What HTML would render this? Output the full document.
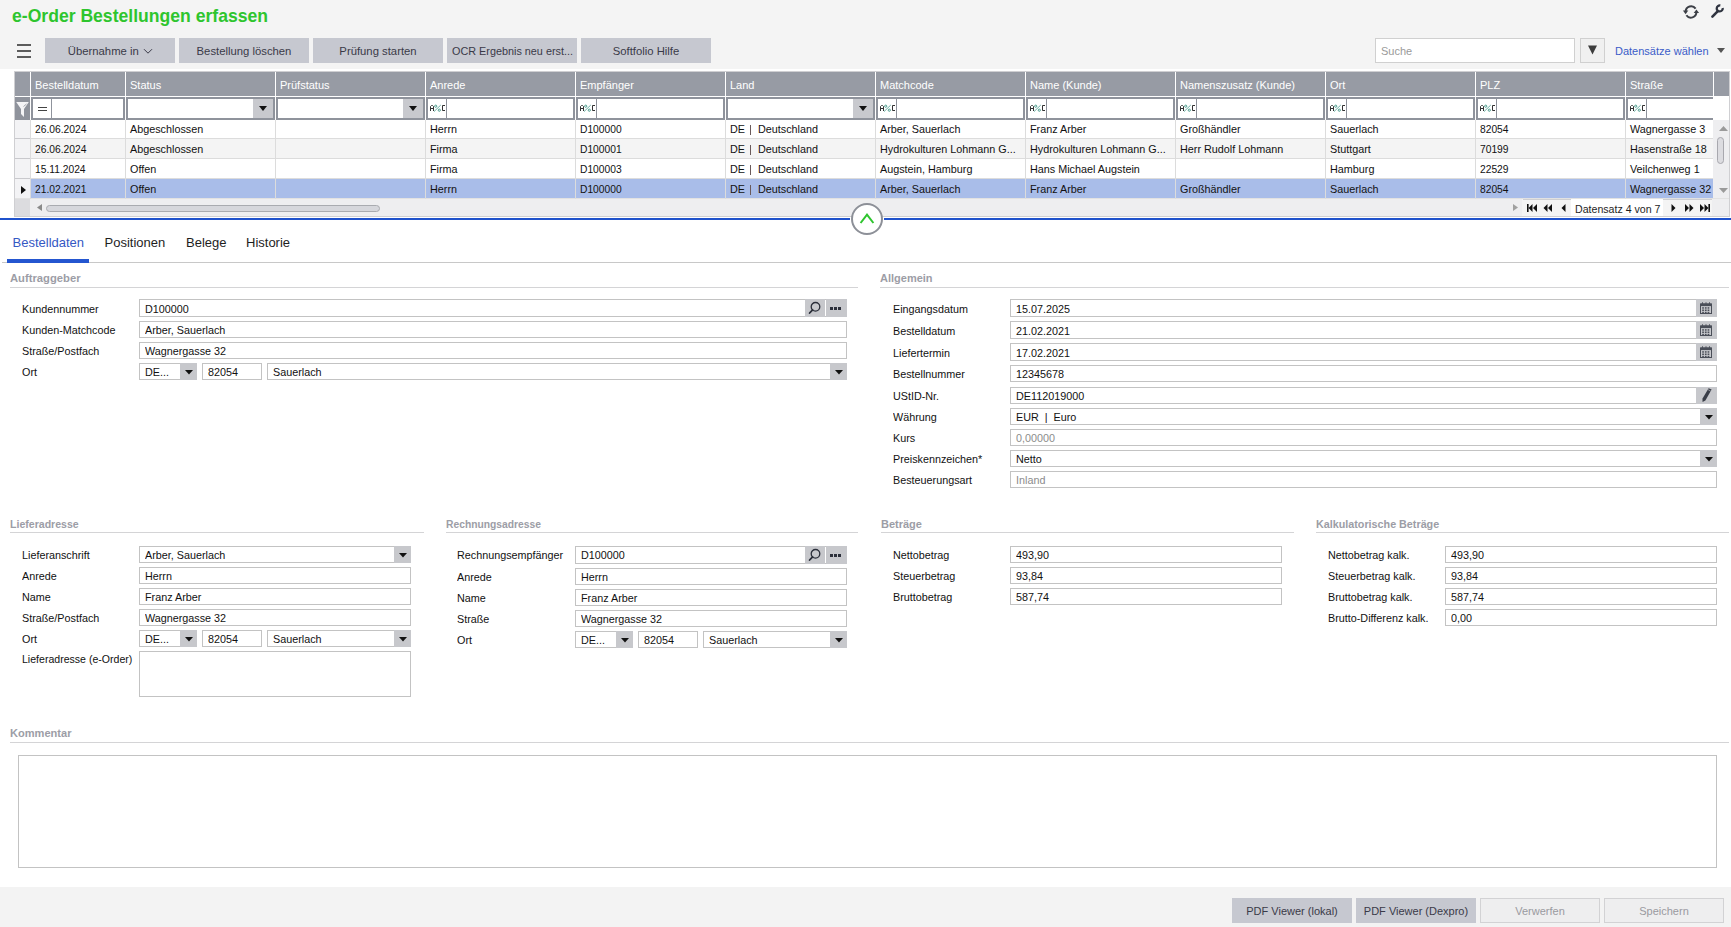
<!DOCTYPE html><html><head><meta charset="utf-8"><style>
html,body{margin:0;padding:0;width:1731px;height:927px;overflow:hidden;background:#fff;position:relative;font-family:"Liberation Sans",sans-serif;}
body div{position:absolute;box-sizing:border-box;}
.t{line-height:0;white-space:pre;}
</style></head><body>
<div style="left:0px;top:0px;width:1731px;height:69px;background:#f4f4f4"></div>
<div class="t" style="left:12px;top:15.59px;font-size:18.5px;color:#2ec52e;font-weight:bold;transform:scaleX(0.9503);transform-origin:0 0;">e-Order Bestellungen erfassen</div>
<div style="left:17px;top:44px;width:14px;height:2px;background:#5c5c5c"></div>
<div style="left:17px;top:50px;width:14px;height:2px;background:#5c5c5c"></div>
<div style="left:17px;top:56px;width:14px;height:2px;background:#5c5c5c"></div>
<div style="left:45px;top:38px;width:130px;height:25px;background:#c6c8d0"></div>
<div class="t" style="left:67.8px;top:50.78px;font-size:11.3px;color:#3a3a48;font-weight:normal;">Übernahme in</div>
<div style="left:179px;top:38px;width:130px;height:25px;background:#c6c8d0"></div>
<div class="t" style="left:196.56957421875px;top:50.78px;font-size:11.3px;color:#3a3a48;font-weight:normal;">Bestellung löschen</div>
<div style="left:313px;top:38px;width:130px;height:25px;background:#c6c8d0"></div>
<div class="t" style="left:339.36768359375003px;top:50.78px;font-size:11.3px;color:#3a3a48;font-weight:normal;">Prüfung starten</div>
<div style="left:447px;top:38px;width:130px;height:25px;background:#c6c8d0"></div>
<div class="t" style="left:451.8px;top:50.78px;font-size:11.3px;color:#3a3a48;font-weight:normal;transform:scaleX(0.9585);transform-origin:0 0;">OCR Ergebnis neu erst...</div>
<div style="left:581px;top:38px;width:130px;height:25px;background:#c6c8d0"></div>
<div class="t" style="left:612.7117890625px;top:50.78px;font-size:11.3px;color:#3a3a48;font-weight:normal;">Softfolio Hilfe</div>
<svg style="position:absolute;left:143px;top:48px" width="10" height="7" viewBox="0 0 10 7"><path d="M1 1.2 L5 5.2 L9 1.2" fill="none" stroke="#3a3a48" stroke-width="1"/></svg>
<div style="left:1375px;top:38px;width:200px;height:25px;background:#fff;border:1px solid #d0d0d0"></div>
<div class="t" style="left:1381px;top:51.19px;font-size:11px;color:#9a9a9a;font-weight:normal;">Suche</div>
<div style="left:1580px;top:38px;width:25px;height:25px;background:#f0f0f0;border:1px solid #d0d0d0"></div>
<svg style="position:absolute;left:1588px;top:45px" width="9" height="10" viewBox="0 0 9 10"><path d="M0 0.5 H9 L4.5 9.5 Z" fill="#3c3c3c"/></svg>
<div class="t" style="left:1615px;top:51.19px;font-size:11px;color:#3a5cc8;font-weight:normal;">Datensätze wählen</div>
<svg style="position:absolute;left:1717px;top:48px" width="8" height="5" viewBox="0 0 8 5"><path d="M0 0 H8 L4 5 Z" fill="#555"/></svg>
<svg style="position:absolute;left:1682px;top:3px" width="18" height="18" viewBox="0 0 18 18"><path d="M13.6 5.6 A5.5 5.5 0 0 0 3.6 8.6" fill="none" stroke="#3c3f46" stroke-width="2"/><path d="M0.9 7.6 H6.3 L3.6 11.2 Z" fill="#3c3f46"/><path d="M4.4 12.3 A5.5 5.5 0 0 0 14.4 9.1" fill="none" stroke="#3c3f46" stroke-width="2"/><path d="M11.7 10.1 H17.1 L14.4 6.5 Z" fill="#3c3f46"/></svg>
<svg style="position:absolute;left:1709px;top:3px" width="16" height="16" viewBox="0 0 16 16"><path d="M3.4 13.6 L8.6 8.4" stroke="#2f3440" stroke-width="2.6" stroke-linecap="round"/><path d="M13.7 5.0 A3 3 0 1 1 11.3 2.5" fill="none" stroke="#2f3440" stroke-width="2.3"/></svg>
<div style="left:14px;top:71px;width:1716px;height:146px;border:1px solid #cfcfd2"></div>
<div style="left:15px;top:72px;width:1714px;height:24px;background:#979ba4"></div>
<div style="left:15px;top:97px;width:1698px;height:23px;background:#8f939c"></div>
<div style="left:15px;top:96px;width:1714px;height:1px;background:#fff"></div>
<div style="left:1713px;top:96px;width:16px;height:24px;background:#fff"></div>
<div style="left:31px;top:120px;width:1682px;height:19px;background:#ffffff"></div>
<div style="left:31px;top:138px;width:1682px;height:1px;background:#dcdcdc"></div>
<div style="left:31px;top:139px;width:1682px;height:19px;background:#f4f4f4"></div>
<div style="left:31px;top:158px;width:1682px;height:1px;background:#dcdcdc"></div>
<div style="left:31px;top:159px;width:1682px;height:19px;background:#ffffff"></div>
<div style="left:31px;top:178px;width:1682px;height:1px;background:#dcdcdc"></div>
<div style="left:31px;top:179px;width:1682px;height:19px;background:#a9bde9"></div>
<div style="left:15px;top:120px;width:15px;height:79px;background:#f3f3f5"></div>
<div style="left:15px;top:138px;width:15px;height:1px;background:#c9c9cd"></div>
<div style="left:15px;top:158px;width:15px;height:1px;background:#c9c9cd"></div>
<div style="left:15px;top:178px;width:15px;height:1px;background:#c9c9cd"></div>
<div style="left:15px;top:198px;width:15px;height:1.5px;background:#c9c9cd"></div>
<svg style="position:absolute;left:15px;top:101px" width="15" height="17" viewBox="0 0 15 17"><path d="M1.2 1 H13.8 L9 8 V16 L6 13 V8 Z" fill="#f4f4f6"/><path d="M8.5 5.5 L11.5 3" stroke="#8f939c" stroke-width="0.8"/></svg>
<svg style="position:absolute;left:21px;top:186px" width="5" height="8" viewBox="0 0 5 8"><path d="M0 0 L5 4 L0 8 Z" fill="#111"/></svg>
<div style="left:1713px;top:120px;width:16px;height:80px;background:#eeeef0"></div>
<svg style="position:absolute;left:1719px;top:126px" width="9" height="5" viewBox="0 0 9 5"><path d="M0 5 L4.5 0 L9 5 Z" fill="#9a9a9a"/></svg>
<div style="left:1717px;top:137px;width:7px;height:27px;background:#dcdce0;border:1px solid #a8a8ae;border-radius:3.5px"></div>
<svg style="position:absolute;left:1719px;top:188px" width="9" height="5" viewBox="0 0 9 5"><path d="M0 0 L4.5 5 L9 0 Z" fill="#9a9a9a"/></svg>
<div style="left:15px;top:198px;width:1714px;height:1px;background:#e2e2e2"></div>
<div style="left:15px;top:199px;width:1714px;height:17px;background:#eeeef0"></div>
<div style="left:15px;top:199px;width:15px;height:17px;background:#dcdcdf"></div>
<svg style="position:absolute;left:37px;top:204px" width="5" height="7" viewBox="0 0 5 7"><path d="M5 0 L0 3.5 L5 7 Z" fill="#8a8a8a"/></svg>
<div style="left:46px;top:204.5px;width:334px;height:7px;background:#d6d7dc;border:1px solid #a9abb0;border-radius:3.5px"></div>
<div style="left:1522px;top:199px;width:190px;height:17px;background:#f4f4f4"></div>
<div style="left:1523px;top:199px;width:189px;height:1px;background:#cfcfd2"></div>
<div style="left:1571px;top:199px;width:92px;height:17px;background:#fff"></div>
<svg style="position:absolute;left:1513px;top:204px" width="5" height="7" viewBox="0 0 5 7"><path d="M0 0 L5 3.5 L0 7 Z" fill="#a0a0a0"/></svg>
<svg style="position:absolute;left:1527px;top:204px" width="10" height="8" viewBox="0 0 10 8"><path d="M0 0 H1.6 V8 H0 Z M5.5 0 L1.6 4 L5.5 8 Z M10 0 L6 4 L10 8 Z" fill="#111"/></svg>
<svg style="position:absolute;left:1543px;top:204px" width="9" height="8" viewBox="0 0 9 8"><path d="M4.5 0 L0.5 4 L4.5 8 Z M9 0 L5 4 L9 8 Z" fill="#111"/></svg>
<svg style="position:absolute;left:1561px;top:204px" width="5" height="8" viewBox="0 0 5 8"><path d="M4.5 0 L0.5 4 L4.5 8 Z" fill="#111"/></svg>
<div class="t" style="left:1574.5px;top:209.19px;font-size:11px;color:#1e1e1e;font-weight:normal;transform:scaleX(0.9643);transform-origin:0 0;">Datensatz 4 von 7</div>
<svg style="position:absolute;left:1671px;top:204px" width="5" height="8" viewBox="0 0 5 8"><path d="M0.5 0 L4.5 4 L0.5 8 Z" fill="#111"/></svg>
<svg style="position:absolute;left:1685px;top:204px" width="9" height="8" viewBox="0 0 9 8"><path d="M0 0 L4 4 L0 8 Z M4.5 0 L8.5 4 L4.5 8 Z" fill="#111"/></svg>
<svg style="position:absolute;left:1700px;top:204px" width="10" height="8" viewBox="0 0 10 8"><path d="M0 0 L4 4 L0 8 Z M4.5 0 L8.4 4 L4.5 8 Z M8.4 0 H10 V8 H8.4 Z" fill="#111"/></svg>
<div style="left:30px;top:72px;width:1px;height:48px;background:#fff"></div>
<div style="left:30px;top:120px;width:1px;height:79px;background:#dcdcdc"></div>
<div style="left:125px;top:72px;width:1px;height:48px;background:#fff"></div>
<div style="left:125px;top:120px;width:1px;height:79px;background:#dcdcdc"></div>
<div style="left:275px;top:72px;width:1px;height:48px;background:#fff"></div>
<div style="left:275px;top:120px;width:1px;height:79px;background:#dcdcdc"></div>
<div style="left:425px;top:72px;width:1px;height:48px;background:#fff"></div>
<div style="left:425px;top:120px;width:1px;height:79px;background:#dcdcdc"></div>
<div style="left:575px;top:72px;width:1px;height:48px;background:#fff"></div>
<div style="left:575px;top:120px;width:1px;height:79px;background:#dcdcdc"></div>
<div style="left:725px;top:72px;width:1px;height:48px;background:#fff"></div>
<div style="left:725px;top:120px;width:1px;height:79px;background:#dcdcdc"></div>
<div style="left:875px;top:72px;width:1px;height:48px;background:#fff"></div>
<div style="left:875px;top:120px;width:1px;height:79px;background:#dcdcdc"></div>
<div style="left:1025px;top:72px;width:1px;height:48px;background:#fff"></div>
<div style="left:1025px;top:120px;width:1px;height:79px;background:#dcdcdc"></div>
<div style="left:1175px;top:72px;width:1px;height:48px;background:#fff"></div>
<div style="left:1175px;top:120px;width:1px;height:79px;background:#dcdcdc"></div>
<div style="left:1325px;top:72px;width:1px;height:48px;background:#fff"></div>
<div style="left:1325px;top:120px;width:1px;height:79px;background:#dcdcdc"></div>
<div style="left:1475px;top:72px;width:1px;height:48px;background:#fff"></div>
<div style="left:1475px;top:120px;width:1px;height:79px;background:#dcdcdc"></div>
<div style="left:1625px;top:72px;width:1px;height:48px;background:#fff"></div>
<div style="left:1625px;top:120px;width:1px;height:79px;background:#dcdcdc"></div>
<div style="left:1713px;top:72px;width:1px;height:48px;background:#fff"></div>
<div class="t" style="left:35px;top:84.89px;font-size:11px;color:#ffffff;font-weight:normal;">Bestelldatum</div>
<div class="t" style="left:130px;top:84.89px;font-size:11px;color:#ffffff;font-weight:normal;">Status</div>
<div class="t" style="left:280px;top:84.89px;font-size:11px;color:#ffffff;font-weight:normal;">Prüfstatus</div>
<div class="t" style="left:430px;top:84.89px;font-size:11px;color:#ffffff;font-weight:normal;">Anrede</div>
<div class="t" style="left:580px;top:84.89px;font-size:11px;color:#ffffff;font-weight:normal;">Empfänger</div>
<div class="t" style="left:730px;top:84.89px;font-size:11px;color:#ffffff;font-weight:normal;">Land</div>
<div class="t" style="left:880px;top:84.89px;font-size:11px;color:#ffffff;font-weight:normal;">Matchcode</div>
<div class="t" style="left:1030px;top:84.89px;font-size:11px;color:#ffffff;font-weight:normal;">Name (Kunde)</div>
<div class="t" style="left:1180px;top:84.89px;font-size:11px;color:#ffffff;font-weight:normal;">Namenszusatz (Kunde)</div>
<div class="t" style="left:1330px;top:84.89px;font-size:11px;color:#ffffff;font-weight:normal;">Ort</div>
<div class="t" style="left:1480px;top:84.89px;font-size:11px;color:#ffffff;font-weight:normal;">PLZ</div>
<div class="t" style="left:1630px;top:84.89px;font-size:11px;color:#ffffff;font-weight:normal;">Straße</div>
<div style="left:33px;top:99px;width:90px;height:19px;background:#fff"></div>
<div style="left:51px;top:99px;width:1px;height:19px;background:#8f939c"></div>
<div style="left:38px;top:107px;width:9px;height:1px;background:#444"></div>
<div style="left:38px;top:110px;width:9px;height:1px;background:#444"></div>
<div style="left:128px;top:99px;width:145px;height:19px;background:#fff"></div>
<div style="left:253px;top:99px;width:20px;height:19px;background:#c8c9ce"></div>
<svg style="position:absolute;left:259px;top:106px" width="8" height="5" viewBox="0 0 8 5"><path d="M0 0 H8 L4 5 Z" fill="#111"/></svg>
<div style="left:278px;top:99px;width:145px;height:19px;background:#fff"></div>
<div style="left:403px;top:99px;width:20px;height:19px;background:#c8c9ce"></div>
<svg style="position:absolute;left:409px;top:106px" width="8" height="5" viewBox="0 0 8 5"><path d="M0 0 H8 L4 5 Z" fill="#111"/></svg>
<div style="left:428px;top:99px;width:145px;height:19px;background:#fff"></div>
<div style="left:446px;top:99px;width:1px;height:19px;background:#8f939c"></div>
<svg style="position:absolute;left:429px;top:103px" width="17" height="10" viewBox="0 0 17 10"><path d="M1.5 8 V3.5 L2.5 2.5 H3.5 L4.5 3.5 V8 M1.5 5.5 H4.5 M16 2.5 H13.5 V7.5 H16" fill="none" stroke="#333" stroke-width="1"/><path d="M5 8.6 L11.8 2" stroke="#5aa89a" stroke-width="0.9"/><circle cx="6.7" cy="3.2" r="1.1" fill="none" stroke="#3f9483" stroke-width="0.9"/><circle cx="10.3" cy="7.2" r="1.1" fill="none" stroke="#3f9483" stroke-width="0.9"/></svg>
<div style="left:578px;top:99px;width:145px;height:19px;background:#fff"></div>
<div style="left:596px;top:99px;width:1px;height:19px;background:#8f939c"></div>
<svg style="position:absolute;left:579px;top:103px" width="17" height="10" viewBox="0 0 17 10"><path d="M1.5 8 V3.5 L2.5 2.5 H3.5 L4.5 3.5 V8 M1.5 5.5 H4.5 M16 2.5 H13.5 V7.5 H16" fill="none" stroke="#333" stroke-width="1"/><path d="M5 8.6 L11.8 2" stroke="#5aa89a" stroke-width="0.9"/><circle cx="6.7" cy="3.2" r="1.1" fill="none" stroke="#3f9483" stroke-width="0.9"/><circle cx="10.3" cy="7.2" r="1.1" fill="none" stroke="#3f9483" stroke-width="0.9"/></svg>
<div style="left:728px;top:99px;width:145px;height:19px;background:#fff"></div>
<div style="left:853px;top:99px;width:20px;height:19px;background:#c8c9ce"></div>
<svg style="position:absolute;left:859px;top:106px" width="8" height="5" viewBox="0 0 8 5"><path d="M0 0 H8 L4 5 Z" fill="#111"/></svg>
<div style="left:878px;top:99px;width:145px;height:19px;background:#fff"></div>
<div style="left:896px;top:99px;width:1px;height:19px;background:#8f939c"></div>
<svg style="position:absolute;left:879px;top:103px" width="17" height="10" viewBox="0 0 17 10"><path d="M1.5 8 V3.5 L2.5 2.5 H3.5 L4.5 3.5 V8 M1.5 5.5 H4.5 M16 2.5 H13.5 V7.5 H16" fill="none" stroke="#333" stroke-width="1"/><path d="M5 8.6 L11.8 2" stroke="#5aa89a" stroke-width="0.9"/><circle cx="6.7" cy="3.2" r="1.1" fill="none" stroke="#3f9483" stroke-width="0.9"/><circle cx="10.3" cy="7.2" r="1.1" fill="none" stroke="#3f9483" stroke-width="0.9"/></svg>
<div style="left:1028px;top:99px;width:145px;height:19px;background:#fff"></div>
<div style="left:1046px;top:99px;width:1px;height:19px;background:#8f939c"></div>
<svg style="position:absolute;left:1029px;top:103px" width="17" height="10" viewBox="0 0 17 10"><path d="M1.5 8 V3.5 L2.5 2.5 H3.5 L4.5 3.5 V8 M1.5 5.5 H4.5 M16 2.5 H13.5 V7.5 H16" fill="none" stroke="#333" stroke-width="1"/><path d="M5 8.6 L11.8 2" stroke="#5aa89a" stroke-width="0.9"/><circle cx="6.7" cy="3.2" r="1.1" fill="none" stroke="#3f9483" stroke-width="0.9"/><circle cx="10.3" cy="7.2" r="1.1" fill="none" stroke="#3f9483" stroke-width="0.9"/></svg>
<div style="left:1178px;top:99px;width:145px;height:19px;background:#fff"></div>
<div style="left:1196px;top:99px;width:1px;height:19px;background:#8f939c"></div>
<svg style="position:absolute;left:1179px;top:103px" width="17" height="10" viewBox="0 0 17 10"><path d="M1.5 8 V3.5 L2.5 2.5 H3.5 L4.5 3.5 V8 M1.5 5.5 H4.5 M16 2.5 H13.5 V7.5 H16" fill="none" stroke="#333" stroke-width="1"/><path d="M5 8.6 L11.8 2" stroke="#5aa89a" stroke-width="0.9"/><circle cx="6.7" cy="3.2" r="1.1" fill="none" stroke="#3f9483" stroke-width="0.9"/><circle cx="10.3" cy="7.2" r="1.1" fill="none" stroke="#3f9483" stroke-width="0.9"/></svg>
<div style="left:1328px;top:99px;width:145px;height:19px;background:#fff"></div>
<div style="left:1346px;top:99px;width:1px;height:19px;background:#8f939c"></div>
<svg style="position:absolute;left:1329px;top:103px" width="17" height="10" viewBox="0 0 17 10"><path d="M1.5 8 V3.5 L2.5 2.5 H3.5 L4.5 3.5 V8 M1.5 5.5 H4.5 M16 2.5 H13.5 V7.5 H16" fill="none" stroke="#333" stroke-width="1"/><path d="M5 8.6 L11.8 2" stroke="#5aa89a" stroke-width="0.9"/><circle cx="6.7" cy="3.2" r="1.1" fill="none" stroke="#3f9483" stroke-width="0.9"/><circle cx="10.3" cy="7.2" r="1.1" fill="none" stroke="#3f9483" stroke-width="0.9"/></svg>
<div style="left:1478px;top:99px;width:145px;height:19px;background:#fff"></div>
<div style="left:1496px;top:99px;width:1px;height:19px;background:#8f939c"></div>
<svg style="position:absolute;left:1479px;top:103px" width="17" height="10" viewBox="0 0 17 10"><path d="M1.5 8 V3.5 L2.5 2.5 H3.5 L4.5 3.5 V8 M1.5 5.5 H4.5 M16 2.5 H13.5 V7.5 H16" fill="none" stroke="#333" stroke-width="1"/><path d="M5 8.6 L11.8 2" stroke="#5aa89a" stroke-width="0.9"/><circle cx="6.7" cy="3.2" r="1.1" fill="none" stroke="#3f9483" stroke-width="0.9"/><circle cx="10.3" cy="7.2" r="1.1" fill="none" stroke="#3f9483" stroke-width="0.9"/></svg>
<div style="left:1628px;top:99px;width:85px;height:19px;background:#fff"></div>
<div style="left:1646px;top:99px;width:1px;height:19px;background:#8f939c"></div>
<svg style="position:absolute;left:1629px;top:103px" width="17" height="10" viewBox="0 0 17 10"><path d="M1.5 8 V3.5 L2.5 2.5 H3.5 L4.5 3.5 V8 M1.5 5.5 H4.5 M16 2.5 H13.5 V7.5 H16" fill="none" stroke="#333" stroke-width="1"/><path d="M5 8.6 L11.8 2" stroke="#5aa89a" stroke-width="0.9"/><circle cx="6.7" cy="3.2" r="1.1" fill="none" stroke="#3f9483" stroke-width="0.9"/><circle cx="10.3" cy="7.2" r="1.1" fill="none" stroke="#3f9483" stroke-width="0.9"/></svg>
<div class="t" style="left:35px;top:129.46px;font-size:10.8px;color:#111111;font-weight:normal;transform:scaleX(0.95);transform-origin:0 0;">26.06.2024</div>
<div class="t" style="left:130px;top:129.46px;font-size:10.8px;color:#111111;font-weight:normal;">Abgeschlossen</div>
<div class="t" style="left:430px;top:129.46px;font-size:10.8px;color:#111111;font-weight:normal;">Herrn</div>
<div class="t" style="left:580px;top:129.46px;font-size:10.8px;color:#111111;font-weight:normal;transform:scaleX(0.95);transform-origin:0 0;">D100000</div>
<div class="t" style="left:730px;top:129.46px;font-size:10.8px;color:#111111;font-weight:normal;">DE</div>
<div style="left:750px;top:125.19999999999999px;width:1px;height:10px;background:#6a5a5a"></div>
<div class="t" style="left:758px;top:129.46px;font-size:10.8px;color:#111111;font-weight:normal;">Deutschland</div>
<div class="t" style="left:880px;top:129.46px;font-size:10.8px;color:#111111;font-weight:normal;">Arber, Sauerlach</div>
<div class="t" style="left:1030px;top:129.46px;font-size:10.8px;color:#111111;font-weight:normal;">Franz Arber</div>
<div class="t" style="left:1180px;top:129.46px;font-size:10.8px;color:#111111;font-weight:normal;">Großhändler</div>
<div class="t" style="left:1330px;top:129.46px;font-size:10.8px;color:#111111;font-weight:normal;">Sauerlach</div>
<div class="t" style="left:1480px;top:129.46px;font-size:10.8px;color:#111111;font-weight:normal;transform:scaleX(0.95);transform-origin:0 0;">82054</div>
<div class="t" style="left:1630px;top:129.46px;font-size:10.8px;color:#111111;font-weight:normal;">Wagnergasse 3</div>
<div class="t" style="left:35px;top:149.46px;font-size:10.8px;color:#111111;font-weight:normal;transform:scaleX(0.95);transform-origin:0 0;">26.06.2024</div>
<div class="t" style="left:130px;top:149.46px;font-size:10.8px;color:#111111;font-weight:normal;">Abgeschlossen</div>
<div class="t" style="left:430px;top:149.46px;font-size:10.8px;color:#111111;font-weight:normal;">Firma</div>
<div class="t" style="left:580px;top:149.46px;font-size:10.8px;color:#111111;font-weight:normal;transform:scaleX(0.95);transform-origin:0 0;">D100001</div>
<div class="t" style="left:730px;top:149.46px;font-size:10.8px;color:#111111;font-weight:normal;">DE</div>
<div style="left:750px;top:145.2px;width:1px;height:10px;background:#6a5a5a"></div>
<div class="t" style="left:758px;top:149.46px;font-size:10.8px;color:#111111;font-weight:normal;">Deutschland</div>
<div class="t" style="left:880px;top:149.46px;font-size:10.8px;color:#111111;font-weight:normal;">Hydrokulturen Lohmann G...</div>
<div class="t" style="left:1030px;top:149.46px;font-size:10.8px;color:#111111;font-weight:normal;">Hydrokulturen Lohmann G...</div>
<div class="t" style="left:1180px;top:149.46px;font-size:10.8px;color:#111111;font-weight:normal;">Herr Rudolf Lohmann</div>
<div class="t" style="left:1330px;top:149.46px;font-size:10.8px;color:#111111;font-weight:normal;">Stuttgart</div>
<div class="t" style="left:1480px;top:149.46px;font-size:10.8px;color:#111111;font-weight:normal;transform:scaleX(0.95);transform-origin:0 0;">70199</div>
<div class="t" style="left:1630px;top:149.46px;font-size:10.8px;color:#111111;font-weight:normal;">Hasenstraße 18</div>
<div class="t" style="left:35px;top:169.46px;font-size:10.8px;color:#111111;font-weight:normal;transform:scaleX(0.95);transform-origin:0 0;">15.11.2024</div>
<div class="t" style="left:130px;top:169.46px;font-size:10.8px;color:#111111;font-weight:normal;">Offen</div>
<div class="t" style="left:430px;top:169.46px;font-size:10.8px;color:#111111;font-weight:normal;">Firma</div>
<div class="t" style="left:580px;top:169.46px;font-size:10.8px;color:#111111;font-weight:normal;transform:scaleX(0.95);transform-origin:0 0;">D100003</div>
<div class="t" style="left:730px;top:169.46px;font-size:10.8px;color:#111111;font-weight:normal;">DE</div>
<div style="left:750px;top:165.2px;width:1px;height:10px;background:#6a5a5a"></div>
<div class="t" style="left:758px;top:169.46px;font-size:10.8px;color:#111111;font-weight:normal;">Deutschland</div>
<div class="t" style="left:880px;top:169.46px;font-size:10.8px;color:#111111;font-weight:normal;">Augstein, Hamburg</div>
<div class="t" style="left:1030px;top:169.46px;font-size:10.8px;color:#111111;font-weight:normal;">Hans Michael Augstein</div>
<div class="t" style="left:1330px;top:169.46px;font-size:10.8px;color:#111111;font-weight:normal;">Hamburg</div>
<div class="t" style="left:1480px;top:169.46px;font-size:10.8px;color:#111111;font-weight:normal;transform:scaleX(0.95);transform-origin:0 0;">22529</div>
<div class="t" style="left:1630px;top:169.46px;font-size:10.8px;color:#111111;font-weight:normal;">Veilchenweg 1</div>
<div class="t" style="left:35px;top:189.46px;font-size:10.8px;color:#111111;font-weight:normal;transform:scaleX(0.95);transform-origin:0 0;">21.02.2021</div>
<div class="t" style="left:130px;top:189.46px;font-size:10.8px;color:#111111;font-weight:normal;">Offen</div>
<div class="t" style="left:430px;top:189.46px;font-size:10.8px;color:#111111;font-weight:normal;">Herrn</div>
<div class="t" style="left:580px;top:189.46px;font-size:10.8px;color:#111111;font-weight:normal;transform:scaleX(0.95);transform-origin:0 0;">D100000</div>
<div class="t" style="left:730px;top:189.46px;font-size:10.8px;color:#111111;font-weight:normal;">DE</div>
<div style="left:750px;top:185.2px;width:1px;height:10px;background:#6a5a5a"></div>
<div class="t" style="left:758px;top:189.46px;font-size:10.8px;color:#111111;font-weight:normal;">Deutschland</div>
<div class="t" style="left:880px;top:189.46px;font-size:10.8px;color:#111111;font-weight:normal;">Arber, Sauerlach</div>
<div class="t" style="left:1030px;top:189.46px;font-size:10.8px;color:#111111;font-weight:normal;">Franz Arber</div>
<div class="t" style="left:1180px;top:189.46px;font-size:10.8px;color:#111111;font-weight:normal;">Großhändler</div>
<div class="t" style="left:1330px;top:189.46px;font-size:10.8px;color:#111111;font-weight:normal;">Sauerlach</div>
<div class="t" style="left:1480px;top:189.46px;font-size:10.8px;color:#111111;font-weight:normal;transform:scaleX(0.95);transform-origin:0 0;">82054</div>
<div class="t" style="left:1630px;top:189.46px;font-size:10.8px;color:#111111;font-weight:normal;">Wagnergasse 32</div>
<div style="left:0px;top:218px;width:1731px;height:2px;background:#1f52cc"></div>
<div style="left:850px;top:217px;width:34px;height:4px;background:#fff"></div>
<div style="left:851px;top:203px;width:32px;height:32px;border-radius:50%;background:#fff;border:2px solid #8d9098"></div>
<svg style="position:absolute;left:858px;top:212px" width="18" height="14" viewBox="0 0 18 14"><path d="M2.6 11 L9 2.6 L15.4 11" fill="none" stroke="#2ec52e" stroke-width="2"/></svg>
<div style="left:2px;top:262px;width:1729px;height:1px;background:#c8c8c8"></div>
<div style="left:7px;top:259px;width:82px;height:3px;background:#2456d0"></div>
<div style="left:7px;top:262px;width:82px;height:1px;background:#2456d0"></div>
<div class="t" style="left:12.5px;top:242.50px;font-size:13px;color:#3558c4;font-weight:normal;">Bestelldaten</div>
<div class="t" style="left:104.5px;top:242.50px;font-size:13px;color:#1e1e1e;font-weight:normal;">Positionen</div>
<div class="t" style="left:186px;top:242.50px;font-size:13px;color:#1e1e1e;font-weight:normal;">Belege</div>
<div class="t" style="left:246px;top:242.50px;font-size:13px;color:#1e1e1e;font-weight:normal;">Historie</div>
<div class="t" style="left:10px;top:278.12px;font-size:11.2px;color:#9c9da6;font-weight:bold;transform:scaleX(1.0040);transform-origin:0 0;">Auftraggeber</div>
<div style="left:10px;top:286.5px;width:848px;height:1px;background:#d4d4d6"></div>
<div class="t" style="left:21.9px;top:308.69px;font-size:11px;color:#111111;font-weight:normal;transform:scaleX(0.98);transform-origin:0 0;">Kundennummer</div>
<div class="t" style="left:21.9px;top:330.19px;font-size:11px;color:#111111;font-weight:normal;transform:scaleX(0.98);transform-origin:0 0;">Kunden-Matchcode</div>
<div class="t" style="left:21.9px;top:351.19px;font-size:11px;color:#111111;font-weight:normal;transform:scaleX(0.98);transform-origin:0 0;">Straße/Postfach</div>
<div class="t" style="left:21.9px;top:372.19px;font-size:11px;color:#111111;font-weight:normal;transform:scaleX(0.98);transform-origin:0 0;">Ort</div>
<div style="left:139px;top:299px;width:708px;height:18px;background:#fff;border:1px solid #c3c3c3"></div>
<div class="t" style="left:145px;top:308.69px;font-size:11px;color:#111111;font-weight:normal;transform:scaleX(0.98);transform-origin:0 0;">D100000</div>
<div style="left:826px;top:299px;width:21px;height:18px;background:#c7c8cc"></div>
<div style="left:830px;top:306.5px;width:3px;height:3px;background:#2b2f3a"></div>
<div style="left:834px;top:306.5px;width:3px;height:3px;background:#2b2f3a"></div>
<div style="left:838px;top:306.5px;width:3px;height:3px;background:#2b2f3a"></div>
<div style="left:805px;top:299px;width:20px;height:18px;background:#c7c8cc"></div>
<svg style="position:absolute;left:808px;top:301px" width="13" height="14" viewBox="0 0 13 14"><circle cx="7.5" cy="5.8" r="4.3" fill="none" stroke="#2b2f3a" stroke-width="1.3"/><path d="M4.6 8.8 L1.6 12" stroke="#2b2f3a" stroke-width="1.8" stroke-linecap="round"/></svg>
<div style="left:139px;top:321px;width:708px;height:17px;background:#fff;border:1px solid #c3c3c3"></div>
<div class="t" style="left:145px;top:330.19px;font-size:11px;color:#111111;font-weight:normal;transform:scaleX(0.98);transform-origin:0 0;">Arber, Sauerlach</div>
<div style="left:139px;top:342px;width:708px;height:17px;background:#fff;border:1px solid #c3c3c3"></div>
<div class="t" style="left:145px;top:351.19px;font-size:11px;color:#111111;font-weight:normal;transform:scaleX(0.98);transform-origin:0 0;">Wagnergasse 32</div>
<div style="left:139px;top:363px;width:58px;height:17px;background:#fff;border:1px solid #c3c3c3"></div>
<div class="t" style="left:145px;top:372.19px;font-size:11px;color:#111111;font-weight:normal;transform:scaleX(0.98);transform-origin:0 0;">DE...</div>
<div style="left:180px;top:363px;width:17px;height:17px;background:#c7c8cc"></div>
<svg style="position:absolute;left:184.5px;top:369.5px" width="8" height="5" viewBox="0 0 8 5"><path d="M0 0 H8 L4 4.5 Z" fill="#111"/></svg>
<div style="left:202px;top:363px;width:60px;height:17px;background:#fff;border:1px solid #c3c3c3"></div>
<div class="t" style="left:208px;top:372.19px;font-size:11px;color:#111111;font-weight:normal;transform:scaleX(0.98);transform-origin:0 0;">82054</div>
<div style="left:267px;top:363px;width:580px;height:17px;background:#fff;border:1px solid #c3c3c3"></div>
<div class="t" style="left:273px;top:372.19px;font-size:11px;color:#111111;font-weight:normal;transform:scaleX(0.98);transform-origin:0 0;">Sauerlach</div>
<div style="left:830px;top:363px;width:17px;height:17px;background:#c7c8cc"></div>
<svg style="position:absolute;left:834.5px;top:369.5px" width="8" height="5" viewBox="0 0 8 5"><path d="M0 0 H8 L4 4.5 Z" fill="#111"/></svg>
<div class="t" style="left:880px;top:278.12px;font-size:11.2px;color:#9c9da6;font-weight:bold;transform:scaleX(0.9828);transform-origin:0 0;">Allgemein</div>
<div style="left:880px;top:286.5px;width:849px;height:1px;background:#d4d4d6"></div>
<div class="t" style="left:892.5px;top:308.69px;font-size:11px;color:#111111;font-weight:normal;transform:scaleX(0.98);transform-origin:0 0;">Eingangsdatum</div>
<div style="left:1010px;top:299px;width:707px;height:18px;background:#fff;border:1px solid #c3c3c3"></div>
<div class="t" style="left:1016px;top:308.69px;font-size:11px;color:#111111;font-weight:normal;transform:scaleX(0.98);transform-origin:0 0;">15.07.2025</div>
<div style="left:1696px;top:299px;width:21px;height:18px;background:#c7c8cc"></div>
<svg style="position:absolute;left:1700px;top:302px" width="12" height="12" viewBox="0 0 12 12"><rect x="0.5" y="2" width="11" height="9.5" fill="none" stroke="#4a4e58" stroke-width="1"/><rect x="0.5" y="1.5" width="11" height="2.6" fill="#4a4e58"/><rect x="2" y="0.3" width="1" height="1.5" fill="#4a4e58"/><rect x="5.5" y="0.3" width="1" height="1.5" fill="#4a4e58"/><rect x="9" y="0.3" width="1" height="1.5" fill="#4a4e58"/><rect x="2.2" y="5.2" width="1.7" height="1.5" fill="#4a4e58"/><rect x="4.9" y="5.2" width="1.7" height="1.5" fill="#4a4e58"/><rect x="7.6" y="5.2" width="1.7" height="1.5" fill="#4a4e58"/><rect x="2.2" y="7.5" width="1.7" height="1.5" fill="#4a4e58"/><rect x="4.9" y="7.5" width="1.7" height="1.5" fill="#4a4e58"/><rect x="7.6" y="7.5" width="1.7" height="1.5" fill="#4a4e58"/><rect x="2.2" y="9.8" width="1.7" height="1.5" fill="#4a4e58"/><rect x="4.9" y="9.8" width="1.7" height="1.5" fill="#4a4e58"/><rect x="7.6" y="9.8" width="1.7" height="1.5" fill="#4a4e58"/></svg>
<div class="t" style="left:892.5px;top:330.69px;font-size:11px;color:#111111;font-weight:normal;transform:scaleX(0.98);transform-origin:0 0;">Bestelldatum</div>
<div style="left:1010px;top:321px;width:707px;height:18px;background:#fff;border:1px solid #c3c3c3"></div>
<div class="t" style="left:1016px;top:330.69px;font-size:11px;color:#111111;font-weight:normal;transform:scaleX(0.98);transform-origin:0 0;">21.02.2021</div>
<div style="left:1696px;top:321px;width:21px;height:18px;background:#c7c8cc"></div>
<svg style="position:absolute;left:1700px;top:324px" width="12" height="12" viewBox="0 0 12 12"><rect x="0.5" y="2" width="11" height="9.5" fill="none" stroke="#4a4e58" stroke-width="1"/><rect x="0.5" y="1.5" width="11" height="2.6" fill="#4a4e58"/><rect x="2" y="0.3" width="1" height="1.5" fill="#4a4e58"/><rect x="5.5" y="0.3" width="1" height="1.5" fill="#4a4e58"/><rect x="9" y="0.3" width="1" height="1.5" fill="#4a4e58"/><rect x="2.2" y="5.2" width="1.7" height="1.5" fill="#4a4e58"/><rect x="4.9" y="5.2" width="1.7" height="1.5" fill="#4a4e58"/><rect x="7.6" y="5.2" width="1.7" height="1.5" fill="#4a4e58"/><rect x="2.2" y="7.5" width="1.7" height="1.5" fill="#4a4e58"/><rect x="4.9" y="7.5" width="1.7" height="1.5" fill="#4a4e58"/><rect x="7.6" y="7.5" width="1.7" height="1.5" fill="#4a4e58"/><rect x="2.2" y="9.8" width="1.7" height="1.5" fill="#4a4e58"/><rect x="4.9" y="9.8" width="1.7" height="1.5" fill="#4a4e58"/><rect x="7.6" y="9.8" width="1.7" height="1.5" fill="#4a4e58"/></svg>
<div class="t" style="left:892.5px;top:352.69px;font-size:11px;color:#111111;font-weight:normal;transform:scaleX(0.98);transform-origin:0 0;">Liefertermin</div>
<div style="left:1010px;top:343px;width:707px;height:18px;background:#fff;border:1px solid #c3c3c3"></div>
<div class="t" style="left:1016px;top:352.69px;font-size:11px;color:#111111;font-weight:normal;transform:scaleX(0.98);transform-origin:0 0;">17.02.2021</div>
<div style="left:1696px;top:343px;width:21px;height:18px;background:#c7c8cc"></div>
<svg style="position:absolute;left:1700px;top:346px" width="12" height="12" viewBox="0 0 12 12"><rect x="0.5" y="2" width="11" height="9.5" fill="none" stroke="#4a4e58" stroke-width="1"/><rect x="0.5" y="1.5" width="11" height="2.6" fill="#4a4e58"/><rect x="2" y="0.3" width="1" height="1.5" fill="#4a4e58"/><rect x="5.5" y="0.3" width="1" height="1.5" fill="#4a4e58"/><rect x="9" y="0.3" width="1" height="1.5" fill="#4a4e58"/><rect x="2.2" y="5.2" width="1.7" height="1.5" fill="#4a4e58"/><rect x="4.9" y="5.2" width="1.7" height="1.5" fill="#4a4e58"/><rect x="7.6" y="5.2" width="1.7" height="1.5" fill="#4a4e58"/><rect x="2.2" y="7.5" width="1.7" height="1.5" fill="#4a4e58"/><rect x="4.9" y="7.5" width="1.7" height="1.5" fill="#4a4e58"/><rect x="7.6" y="7.5" width="1.7" height="1.5" fill="#4a4e58"/><rect x="2.2" y="9.8" width="1.7" height="1.5" fill="#4a4e58"/><rect x="4.9" y="9.8" width="1.7" height="1.5" fill="#4a4e58"/><rect x="7.6" y="9.8" width="1.7" height="1.5" fill="#4a4e58"/></svg>
<div class="t" style="left:892.5px;top:374.19px;font-size:11px;color:#111111;font-weight:normal;transform:scaleX(0.98);transform-origin:0 0;">Bestellnummer</div>
<div style="left:1010px;top:365px;width:707px;height:17px;background:#fff;border:1px solid #c3c3c3"></div>
<div class="t" style="left:1016px;top:374.19px;font-size:11px;color:#111111;font-weight:normal;transform:scaleX(0.98);transform-origin:0 0;">12345678</div>
<div class="t" style="left:892.5px;top:396.19px;font-size:11px;color:#111111;font-weight:normal;transform:scaleX(0.98);transform-origin:0 0;">UStID-Nr.</div>
<div style="left:1010px;top:387px;width:707px;height:17px;background:#fff;border:1px solid #c3c3c3"></div>
<div class="t" style="left:1016px;top:396.19px;font-size:11px;color:#111111;font-weight:normal;transform:scaleX(0.98);transform-origin:0 0;">DE112019000</div>
<div style="left:1696px;top:387px;width:21px;height:17px;background:#c7c8cc"></div>
<svg style="position:absolute;left:1701px;top:387px" width="12" height="16" viewBox="0 0 12 16"><path d="M7.6 1.2 L10.6 2.6 L4.4 13.6 L1.6 15 L1.4 11.8 Z" fill="#3a3e48"/><path d="M7 2.6 L9.6 4" stroke="#c7c8cc" stroke-width="0.6"/></svg>
<div class="t" style="left:892.5px;top:417.19px;font-size:11px;color:#111111;font-weight:normal;transform:scaleX(0.98);transform-origin:0 0;">Währung</div>
<div style="left:1010px;top:408px;width:707px;height:17px;background:#fff;border:1px solid #c3c3c3"></div>
<div class="t" style="left:1016px;top:417.19px;font-size:11px;color:#111111;font-weight:normal;transform:scaleX(0.98);transform-origin:0 0;">EUR  |  Euro</div>
<div style="left:1700px;top:408px;width:17px;height:17px;background:#c7c8cc"></div>
<svg style="position:absolute;left:1704.5px;top:414.5px" width="8" height="5" viewBox="0 0 8 5"><path d="M0 0 H8 L4 4.5 Z" fill="#111"/></svg>
<div class="t" style="left:892.5px;top:438.19px;font-size:11px;color:#111111;font-weight:normal;transform:scaleX(0.98);transform-origin:0 0;">Kurs</div>
<div style="left:1010px;top:429px;width:707px;height:17px;background:#fff;border:1px solid #c3c3c3"></div>
<div class="t" style="left:1016px;top:438.19px;font-size:11px;color:#8c8c8c;font-weight:normal;transform:scaleX(0.98);transform-origin:0 0;">0,00000</div>
<div class="t" style="left:892.5px;top:459.19px;font-size:11px;color:#111111;font-weight:normal;transform:scaleX(0.98);transform-origin:0 0;">Preiskennzeichen*</div>
<div style="left:1010px;top:450px;width:707px;height:17px;background:#fff;border:1px solid #c3c3c3"></div>
<div class="t" style="left:1016px;top:459.19px;font-size:11px;color:#111111;font-weight:normal;transform:scaleX(0.98);transform-origin:0 0;">Netto</div>
<div style="left:1700px;top:450px;width:17px;height:17px;background:#c7c8cc"></div>
<svg style="position:absolute;left:1704.5px;top:456.5px" width="8" height="5" viewBox="0 0 8 5"><path d="M0 0 H8 L4 4.5 Z" fill="#111"/></svg>
<div class="t" style="left:892.5px;top:480.19px;font-size:11px;color:#111111;font-weight:normal;transform:scaleX(0.98);transform-origin:0 0;">Besteuerungsart</div>
<div style="left:1010px;top:471px;width:707px;height:17px;background:#fff;border:1px solid #c3c3c3"></div>
<div class="t" style="left:1016px;top:480.19px;font-size:11px;color:#8c8c8c;font-weight:normal;transform:scaleX(0.98);transform-origin:0 0;">Inland</div>
<div class="t" style="left:10px;top:523.92px;font-size:11.2px;color:#9c9da6;font-weight:bold;transform:scaleX(0.9445);transform-origin:0 0;">Lieferadresse</div>
<div style="left:10px;top:532.3px;width:414px;height:1px;background:#d4d4d6"></div>
<div class="t" style="left:21.9px;top:555.19px;font-size:11px;color:#111111;font-weight:normal;transform:scaleX(0.98);transform-origin:0 0;">Lieferanschrift</div>
<div class="t" style="left:21.9px;top:576.19px;font-size:11px;color:#111111;font-weight:normal;transform:scaleX(0.98);transform-origin:0 0;">Anrede</div>
<div class="t" style="left:21.9px;top:597.19px;font-size:11px;color:#111111;font-weight:normal;transform:scaleX(0.98);transform-origin:0 0;">Name</div>
<div class="t" style="left:21.9px;top:618.19px;font-size:11px;color:#111111;font-weight:normal;transform:scaleX(0.98);transform-origin:0 0;">Straße/Postfach</div>
<div class="t" style="left:21.9px;top:639.19px;font-size:11px;color:#111111;font-weight:normal;transform:scaleX(0.98);transform-origin:0 0;">Ort</div>
<div class="t" style="left:21.9px;top:659.19px;font-size:11px;color:#111111;font-weight:normal;transform:scaleX(0.96);transform-origin:0 0;">Lieferadresse (e-Order)</div>
<div style="left:139px;top:546px;width:272px;height:17px;background:#fff;border:1px solid #c3c3c3"></div>
<div class="t" style="left:145px;top:555.19px;font-size:11px;color:#111111;font-weight:normal;transform:scaleX(0.98);transform-origin:0 0;">Arber, Sauerlach</div>
<div style="left:394px;top:546px;width:17px;height:17px;background:#c7c8cc"></div>
<svg style="position:absolute;left:398.5px;top:552.5px" width="8" height="5" viewBox="0 0 8 5"><path d="M0 0 H8 L4 4.5 Z" fill="#111"/></svg>
<div style="left:139px;top:567px;width:272px;height:17px;background:#fff;border:1px solid #c3c3c3"></div>
<div class="t" style="left:145px;top:576.19px;font-size:11px;color:#111111;font-weight:normal;transform:scaleX(0.98);transform-origin:0 0;">Herrn</div>
<div style="left:139px;top:588px;width:272px;height:17px;background:#fff;border:1px solid #c3c3c3"></div>
<div class="t" style="left:145px;top:597.19px;font-size:11px;color:#111111;font-weight:normal;transform:scaleX(0.98);transform-origin:0 0;">Franz Arber</div>
<div style="left:139px;top:609px;width:272px;height:17px;background:#fff;border:1px solid #c3c3c3"></div>
<div class="t" style="left:145px;top:618.19px;font-size:11px;color:#111111;font-weight:normal;transform:scaleX(0.98);transform-origin:0 0;">Wagnergasse 32</div>
<div style="left:139px;top:630px;width:58px;height:17px;background:#fff;border:1px solid #c3c3c3"></div>
<div class="t" style="left:145px;top:639.19px;font-size:11px;color:#111111;font-weight:normal;transform:scaleX(0.98);transform-origin:0 0;">DE...</div>
<div style="left:180px;top:630px;width:17px;height:17px;background:#c7c8cc"></div>
<svg style="position:absolute;left:184.5px;top:636.5px" width="8" height="5" viewBox="0 0 8 5"><path d="M0 0 H8 L4 4.5 Z" fill="#111"/></svg>
<div style="left:202px;top:630px;width:60px;height:17px;background:#fff;border:1px solid #c3c3c3"></div>
<div class="t" style="left:208px;top:639.19px;font-size:11px;color:#111111;font-weight:normal;transform:scaleX(0.98);transform-origin:0 0;">82054</div>
<div style="left:267px;top:630px;width:144px;height:17px;background:#fff;border:1px solid #c3c3c3"></div>
<div class="t" style="left:273px;top:639.19px;font-size:11px;color:#111111;font-weight:normal;transform:scaleX(0.98);transform-origin:0 0;">Sauerlach</div>
<div style="left:394px;top:630px;width:17px;height:17px;background:#c7c8cc"></div>
<svg style="position:absolute;left:398.5px;top:636.5px" width="8" height="5" viewBox="0 0 8 5"><path d="M0 0 H8 L4 4.5 Z" fill="#111"/></svg>
<div style="left:139px;top:651px;width:272px;height:46px;background:#fff;border:1px solid #c3c3c3"></div>
<div class="t" style="left:445.5px;top:523.92px;font-size:11.2px;color:#9c9da6;font-weight:bold;transform:scaleX(0.9204);transform-origin:0 0;">Rechnungsadresse</div>
<div style="left:445.5px;top:532.3px;width:412.5px;height:1px;background:#d4d4d6"></div>
<div class="t" style="left:457px;top:555.19px;font-size:11px;color:#111111;font-weight:normal;transform:scaleX(0.98);transform-origin:0 0;">Rechnungsempfänger</div>
<div class="t" style="left:457px;top:577.19px;font-size:11px;color:#111111;font-weight:normal;transform:scaleX(0.98);transform-origin:0 0;">Anrede</div>
<div class="t" style="left:457px;top:598.19px;font-size:11px;color:#111111;font-weight:normal;transform:scaleX(0.98);transform-origin:0 0;">Name</div>
<div class="t" style="left:457px;top:619.19px;font-size:11px;color:#111111;font-weight:normal;transform:scaleX(0.98);transform-origin:0 0;">Straße</div>
<div class="t" style="left:457px;top:640.19px;font-size:11px;color:#111111;font-weight:normal;transform:scaleX(0.98);transform-origin:0 0;">Ort</div>
<div style="left:575px;top:546px;width:272px;height:17.5px;background:#fff;border:1px solid #c3c3c3"></div>
<div class="t" style="left:581px;top:555.44px;font-size:11px;color:#111111;font-weight:normal;transform:scaleX(0.98);transform-origin:0 0;">D100000</div>
<div style="left:826px;top:546px;width:21px;height:17.5px;background:#c7c8cc"></div>
<div style="left:830px;top:553.5px;width:3px;height:3px;background:#2b2f3a"></div>
<div style="left:834px;top:553.5px;width:3px;height:3px;background:#2b2f3a"></div>
<div style="left:838px;top:553.5px;width:3px;height:3px;background:#2b2f3a"></div>
<div style="left:805px;top:546px;width:20px;height:17.5px;background:#c7c8cc"></div>
<svg style="position:absolute;left:808px;top:548px" width="13" height="14" viewBox="0 0 13 14"><circle cx="7.5" cy="5.8" r="4.3" fill="none" stroke="#2b2f3a" stroke-width="1.3"/><path d="M4.6 8.8 L1.6 12" stroke="#2b2f3a" stroke-width="1.8" stroke-linecap="round"/></svg>
<div style="left:575px;top:568px;width:272px;height:17px;background:#fff;border:1px solid #c3c3c3"></div>
<div class="t" style="left:581px;top:577.19px;font-size:11px;color:#111111;font-weight:normal;transform:scaleX(0.98);transform-origin:0 0;">Herrn</div>
<div style="left:575px;top:589px;width:272px;height:17px;background:#fff;border:1px solid #c3c3c3"></div>
<div class="t" style="left:581px;top:598.19px;font-size:11px;color:#111111;font-weight:normal;transform:scaleX(0.98);transform-origin:0 0;">Franz Arber</div>
<div style="left:575px;top:610px;width:272px;height:17px;background:#fff;border:1px solid #c3c3c3"></div>
<div class="t" style="left:581px;top:619.19px;font-size:11px;color:#111111;font-weight:normal;transform:scaleX(0.98);transform-origin:0 0;">Wagnergasse 32</div>
<div style="left:575px;top:631px;width:58px;height:17px;background:#fff;border:1px solid #c3c3c3"></div>
<div class="t" style="left:581px;top:640.19px;font-size:11px;color:#111111;font-weight:normal;transform:scaleX(0.98);transform-origin:0 0;">DE...</div>
<div style="left:616px;top:631px;width:17px;height:17px;background:#c7c8cc"></div>
<svg style="position:absolute;left:620.5px;top:637.5px" width="8" height="5" viewBox="0 0 8 5"><path d="M0 0 H8 L4 4.5 Z" fill="#111"/></svg>
<div style="left:638px;top:631px;width:60px;height:17px;background:#fff;border:1px solid #c3c3c3"></div>
<div class="t" style="left:644px;top:640.19px;font-size:11px;color:#111111;font-weight:normal;transform:scaleX(0.98);transform-origin:0 0;">82054</div>
<div style="left:703px;top:631px;width:144px;height:17px;background:#fff;border:1px solid #c3c3c3"></div>
<div class="t" style="left:709px;top:640.19px;font-size:11px;color:#111111;font-weight:normal;transform:scaleX(0.98);transform-origin:0 0;">Sauerlach</div>
<div style="left:830px;top:631px;width:17px;height:17px;background:#c7c8cc"></div>
<svg style="position:absolute;left:834.5px;top:637.5px" width="8" height="5" viewBox="0 0 8 5"><path d="M0 0 H8 L4 4.5 Z" fill="#111"/></svg>
<div class="t" style="left:880.5px;top:523.92px;font-size:11.2px;color:#9c9da6;font-weight:bold;transform:scaleX(0.9831);transform-origin:0 0;">Beträge</div>
<div style="left:880.5px;top:532.3px;width:413.5px;height:1px;background:#d4d4d6"></div>
<div class="t" style="left:893px;top:555.19px;font-size:11px;color:#111111;font-weight:normal;transform:scaleX(0.98);transform-origin:0 0;">Nettobetrag</div>
<div style="left:1010px;top:546px;width:272px;height:17px;background:#fff;border:1px solid #c3c3c3"></div>
<div class="t" style="left:1016px;top:555.19px;font-size:11px;color:#111111;font-weight:normal;transform:scaleX(0.98);transform-origin:0 0;">493,90</div>
<div class="t" style="left:893px;top:576.19px;font-size:11px;color:#111111;font-weight:normal;transform:scaleX(0.98);transform-origin:0 0;">Steuerbetrag</div>
<div style="left:1010px;top:567px;width:272px;height:17px;background:#fff;border:1px solid #c3c3c3"></div>
<div class="t" style="left:1016px;top:576.19px;font-size:11px;color:#111111;font-weight:normal;transform:scaleX(0.98);transform-origin:0 0;">93,84</div>
<div class="t" style="left:893px;top:597.19px;font-size:11px;color:#111111;font-weight:normal;transform:scaleX(0.98);transform-origin:0 0;">Bruttobetrag</div>
<div style="left:1010px;top:588px;width:272px;height:17px;background:#fff;border:1px solid #c3c3c3"></div>
<div class="t" style="left:1016px;top:597.19px;font-size:11px;color:#111111;font-weight:normal;transform:scaleX(0.98);transform-origin:0 0;">587,74</div>
<div class="t" style="left:1316px;top:523.92px;font-size:11.2px;color:#9c9da6;font-weight:bold;transform:scaleX(0.9616);transform-origin:0 0;">Kalkulatorische Beträge</div>
<div style="left:1316px;top:532.3px;width:413px;height:1px;background:#d4d4d6"></div>
<div class="t" style="left:1328px;top:555.19px;font-size:11px;color:#111111;font-weight:normal;transform:scaleX(0.98);transform-origin:0 0;">Nettobetrag kalk.</div>
<div style="left:1445px;top:546px;width:272px;height:17px;background:#fff;border:1px solid #c3c3c3"></div>
<div class="t" style="left:1451px;top:555.19px;font-size:11px;color:#111111;font-weight:normal;transform:scaleX(0.98);transform-origin:0 0;">493,90</div>
<div class="t" style="left:1328px;top:576.19px;font-size:11px;color:#111111;font-weight:normal;transform:scaleX(0.98);transform-origin:0 0;">Steuerbetrag kalk.</div>
<div style="left:1445px;top:567px;width:272px;height:17px;background:#fff;border:1px solid #c3c3c3"></div>
<div class="t" style="left:1451px;top:576.19px;font-size:11px;color:#111111;font-weight:normal;transform:scaleX(0.98);transform-origin:0 0;">93,84</div>
<div class="t" style="left:1328px;top:597.19px;font-size:11px;color:#111111;font-weight:normal;transform:scaleX(0.98);transform-origin:0 0;">Bruttobetrag kalk.</div>
<div style="left:1445px;top:588px;width:272px;height:17px;background:#fff;border:1px solid #c3c3c3"></div>
<div class="t" style="left:1451px;top:597.19px;font-size:11px;color:#111111;font-weight:normal;transform:scaleX(0.98);transform-origin:0 0;">587,74</div>
<div class="t" style="left:1328px;top:618.19px;font-size:11px;color:#111111;font-weight:normal;transform:scaleX(0.98);transform-origin:0 0;">Brutto-Differenz kalk.</div>
<div style="left:1445px;top:609px;width:272px;height:17px;background:#fff;border:1px solid #c3c3c3"></div>
<div class="t" style="left:1451px;top:618.19px;font-size:11px;color:#111111;font-weight:normal;transform:scaleX(0.98);transform-origin:0 0;">0,00</div>
<div class="t" style="left:10px;top:733.12px;font-size:11.2px;color:#9c9da6;font-weight:bold;transform:scaleX(0.9890);transform-origin:0 0;">Kommentar</div>
<div style="left:10px;top:741.5px;width:1719px;height:1px;background:#d4d4d6"></div>
<div style="left:18px;top:755px;width:1699px;height:113px;background:#fff;border:1px solid #c3c3c3"></div>
<div style="left:0px;top:887px;width:1731px;height:40px;background:#f3f3f3"></div>
<div style="left:1232px;top:898px;width:120px;height:25px;background:#c6c8d0"></div>
<div class="t" style="left:1246.2550390625px;top:911.19px;font-size:11px;color:#3a3a48;font-weight:normal;">PDF Viewer (lokal)</div>
<div style="left:1356px;top:898px;width:120px;height:25px;background:#c6c8d0"></div>
<div class="t" style="left:1363.8363671875px;top:911.19px;font-size:11px;color:#3a3a48;font-weight:normal;">PDF Viewer (Dexpro)</div>
<div style="left:1480px;top:898px;width:120px;height:25px;background:#eeeeef;border:1px solid #d2d2d4"></div>
<div class="t" style="left:1515.235390625px;top:911.19px;font-size:11px;color:#9a9aa0;font-weight:normal;">Verwerfen</div>
<div style="left:1604px;top:898px;width:120px;height:25px;background:#eeeeef;border:1px solid #d2d2d4"></div>
<div class="t" style="left:1639.2328125px;top:911.19px;font-size:11px;color:#9a9aa0;font-weight:normal;">Speichern</div>
</body></html>
